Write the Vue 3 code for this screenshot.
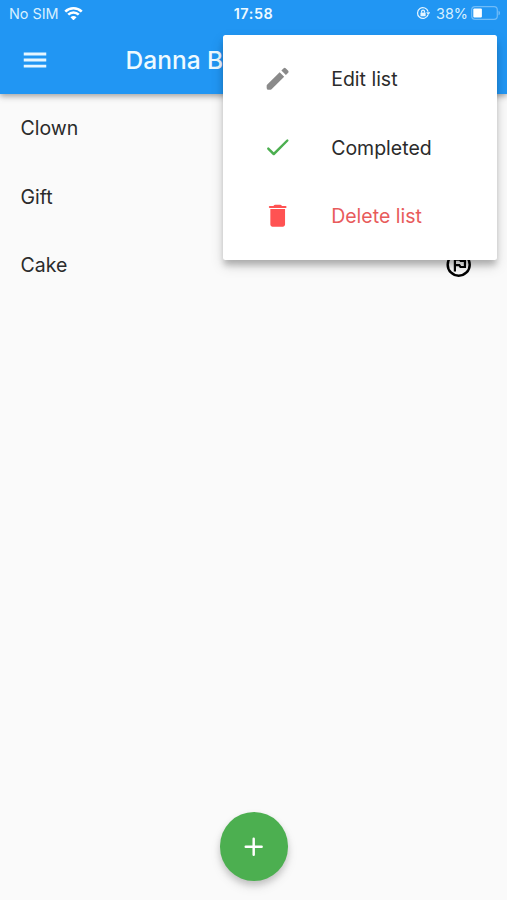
<script setup>
const items = [
  { name: 'Clown', flagged: false },
  { name: 'Gift', flagged: false },
  { name: 'Cake', flagged: true },
]
const actions = [
  {
    label: 'Edit list',
    kind: 'edit',
    path: 'M3 17.7v1.8A1.5 1.5 0 0 0 4.5 21H6.3q.4 0 .7-.3L17.3 10.4 13.6 6.7 3.3 17q-.3.3-.3.7zM20.6 7.1a1.3 1.3 0 0 0 0-1.6l-2.1-2.1a1.3 1.3 0 0 0-1.6 0l-1.9 1.9 3.7 3.7z',
  },
  {
    label: 'Completed',
    kind: 'done',
    path: 'M8.8 16.6L5 12.8q-.7-.6-1.4 0-.6.7 0 1.4L8.1 18.7q.7.6 1.4 0L20.6 7.6q.6-.7 0-1.3-.7-.6-1.4 0z',
  },
  {
    label: 'Delete list',
    kind: 'delete',
    path: 'M6 19.2c0 1 .8 1.8 1.8 1.8h8.4c1 0 1.8-.8 1.8-1.8V6.6H6zM18.4 4h-2.9l-.7-.7q-.4-.3-.8-.3h-4q-.4 0-.8.3L8.5 4H5.6a.8.8 0 0 0 0 1.7h12.8a.8.8 0 0 0 0-1.7z',
  },
]
</script>

<template>
  <div class="screen">
    <header class="top">
      <div class="status">
        <div class="side">
          <span class="carrier">No SIM</span>
          <svg class="wifi" viewBox="0 0 18 14">
            <path d="M1.2 5.3a11.2 11.2 0 0 1 15.6 0M4 8.2a7.2 7.2 0 0 1 10 0" />
            <path class="solid" d="M6.1 10.7a4.3 4.3 0 0 1 5.8 0L9 13.6z" />
          </svg>
        </div>
        <span class="clock">17:58</span>
        <div class="side right">
          <svg class="lock" viewBox="0 0 14 14">
            <path class="ring" d="M11.6 8.5A5.2 5.2 0 1 1 11.7 5.5" />
            <path d="M9.8 6.1h4L11.8 8.7z" />
            <path d="M4.3 6.4h5v3.5h-5z" />
            <path class="ring" d="M5.4 6.5V5.4a1.4 1.4 0 0 1 2.8 0v1.1" />
          </svg>
          <span class="percent">38%</span>
          <svg class="battery" viewBox="0 0 30 14">
            <rect class="shell" x=".7" y=".7" width="25.6" height="12.6" rx="3.3" />
            <rect x="2.3" y="2.5" width="8.6" height="9" rx="1" />
            <path class="cap" d="M27.5 4.7c2 .7 2 3.9 0 4.6z" />
          </svg>
        </div>
      </div>
      <div class="bar">
        <svg class="menu-icon" viewBox="0 0 24 24">
          <path d="M3 18h18v-2.3H3V18zm0-4.85h18v-2.3H3v2.3zM3 6v2.3h18V6H3z" />
        </svg>
        <h1>Danna B</h1>
      </div>
    </header>

    <main>
      <div v-for="item in items" :key="item.name" class="row">
        <span>{{ item.name }}</span>
        <svg v-if="item.flagged" class="icon" viewBox="0 0 24 24">
          <path fill-rule="evenodd" d="M12 2a10 10 0 1 0 0 20 10 10 0 0 0 0-20zm0 18a8 8 0 1 1 0-16 8 8 0 0 1 0 16zM14 8l-1-1H8v10.5h1.8V13.3H12l1 1.5h5V8zm2.2 5h-2.2l-1-1.5H9.8V8.8h2.5l1 1h2.9z" />
        </svg>
      </div>
    </main>

    <button class="fab" aria-label="Add">
      <svg class="icon" viewBox="0 0 24 24">
        <path d="M18.5 13H13v5.5a1 1 0 0 1-2 0V13H5.5a1 1 0 0 1 0-2H11V5.5a1 1 0 0 1 2 0V11h5.5a1 1 0 0 1 0 2z" />
      </svg>
    </button>

    <div class="popup">
      <div v-for="action in actions" :key="action.kind" class="action" :class="action.kind">
        <svg class="icon" viewBox="0 0 24 24"><path :d="action.path" /></svg>
        <span>{{ action.label }}</span>
      </div>
    </div>
  </div>
</template>

<style>
body {
  margin: 0;
  background: #fafafa;
}
</style>

<style scoped>
.screen {
  position: relative;
  display: flex;
  flex-direction: column;
  height: 900px;
  overflow: hidden;
  background: #fafafa;
  color: #2b2b2b;
  font: 400 19.5px/1.2 Inter, sans-serif;
}
.top {
  flex: none;
  height: 93.5px;
  background: #2196f3;
  color: #eefaff;
  box-shadow: 0 2px 5px rgba(0, 0, 0, 0.26), 0 4px 7px rgba(0, 0, 0, 0.1);
}
.status {
  display: grid;
  grid-template-columns: 1fr auto 1fr;
  align-items: center;
  height: 26px;
  padding: 0 7px 0 9px;
  font-size: 14.4px;
}
.status span {
  padding-top: 1px;
}
.side {
  display: flex;
  align-items: center;
  gap: 5px;
}
.right {
  justify-content: flex-end;
}
.carrier {
  color: #d8f0ff;
}
.wifi {
  width: 19px;
  height: 14.8px;
  fill: none;
  stroke: #fff;
  stroke-width: 2.5;
}
.wifi .solid {
  fill: #fff;
  stroke: none;
}
.clock {
  margin-left: -2px;
  font-weight: 600;
  letter-spacing: 0.6px;
}
.lock {
  width: 14.5px;
  height: 14.5px;
  margin-right: 1px;
  fill: #e3f4ff;
}
.lock .ring {
  fill: none;
  stroke: #e3f4ff;
  stroke-width: 1.2;
}
.percent {
  color: #d8f0ff;
}
.battery {
  width: 30px;
  height: 14px;
  margin: 0 -1px 0 -2px;
  fill: #fff;
}
.battery .shell {
  fill: none;
  stroke: #70bcf8;
  stroke-width: 1.2;
}
.battery .cap {
  fill: #70bcf8;
}
.bar {
  display: flex;
  align-items: center;
  height: 67px;
  padding-left: 19.6px;
}
.menu-icon {
  width: 30px;
  height: 30px;
  fill: #e6f6ff;
}
h1 {
  margin: 0 0 0 76px;
  padding-top: 2px;
  font-size: 24.5px;
  font-weight: 500;
  line-height: 1.2;
  white-space: nowrap;
}
.row {
  display: flex;
  align-items: center;
  justify-content: space-between;
  height: 68.5px;
  padding: 0 34px 0 20.5px;
}
.row span,
.action span {
  padding-top: 2px;
}
.action.done span {
  padding-top: 3px;
}
.icon {
  flex: none;
  width: 29.4px;
  height: 29.4px;
}
.row .icon {
  fill: #000;
}
.fab {
  display: flex;
  align-items: center;
  justify-content: center;
  align-self: center;
  width: 68.6px;
  height: 68.6px;
  margin: auto 0 19.4px 1px;
  padding: 0;
  border: 0;
  border-radius: 50%;
  background: #4caf50;
  fill: #fff;
  box-shadow: 0 4px 6px rgba(0, 0, 0, 0.16), 0 6px 12px rgba(0, 0, 0, 0.09);
}
.popup {
  position: absolute;
  top: 34.6px;
  left: 223.4px;
  box-sizing: border-box;
  width: 274px;
  padding: 9.8px 39.2px;
  border-radius: 2.5px;
  background: #fff;
  box-shadow: 0 6px 6px -1px rgba(0, 0, 0, 0.22), 0 6px 14px rgba(0, 0, 0, 0.14);
}
.action {
  display: flex;
  align-items: center;
  gap: 39.2px;
  height: 68.5px;
}
.edit .icon {
  fill: #8a8a8a;
}
.done .icon {
  fill: #4caf50;
}
.delete {
  color: #e85b5b;
}
.delete .icon {
  fill: #ff5252;
}
</style>
